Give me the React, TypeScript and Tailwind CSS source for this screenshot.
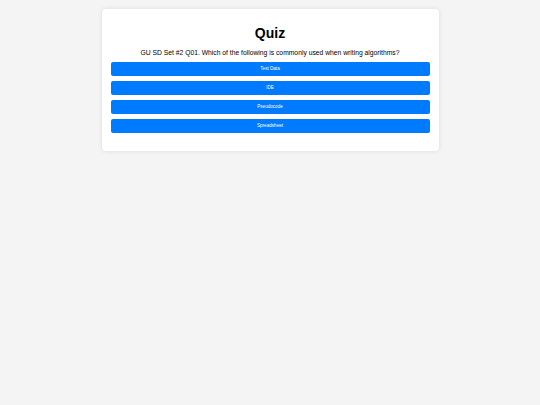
const options = ['Test Data', 'IDE', 'Pseudocode', 'Spreadsheet']

export default function App() {
  return (
    <div className="min-h-screen bg-[#f4f4f4] pt-[9px] font-['Liberation_Sans',Arial,sans-serif]">
      <div className="mx-auto w-[337px] rounded-[4px] bg-white px-[9px] pt-[16px] pb-[18px] shadow-[0_0_5px_rgba(0,0,0,0.1)]">
        <h1 className="text-center text-[14px] font-bold leading-[16px] text-black">Quiz</h1>
        <p className="mt-[8px] text-center text-[6.75px] leading-[8px] text-black">
          GU SD Set #2 Q01. Which of the following is commonly used when writing algorithms?
        </p>
        <div className="mt-[5px] flex flex-col gap-[5px]">
          {options.map(o => (
            <button
              key={o}
              className="h-[14px] w-full rounded-[2px] bg-[#007bff] text-[4.6px] leading-[14px] text-white"
            >
              {o}
            </button>
          ))}
        </div>
      </div>
    </div>
  )
}
